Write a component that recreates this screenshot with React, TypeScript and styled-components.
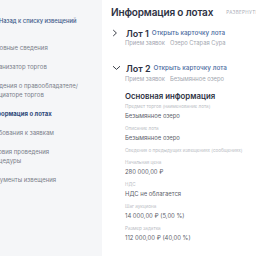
import React from "react";
import styled, { createGlobalStyle } from "styled-components";

const Global = createGlobalStyle`
  html, body { margin: 0; padding: 0; background: #ffffff; overflow: hidden; }
  body { font-family: Inter, "Noto Sans", sans-serif; }
`;

const Page = styled.div`
  display: flex;
  margin-left: -20px;
  width: 300px;
  height: 256px;
`;

const Sidebar = styled.aside`
  width: 122px;
  flex: none;
  background: #f5f6f8;
  box-sizing: border-box;
  padding: 17px 8px 0 8px;
`;

const BackLink = styled.div`
  display: flex;
  align-items: center;
  gap: 3px;
  font-size: 5.8px;
  line-height: 8px;
  font-weight: 500;
  color: #3d5a8a;
  white-space: nowrap;
`;

const NavList = styled.ul`
  list-style: none;
  margin: 17.5px 0 0;
  padding: 0;
  display: flex;
  flex-direction: column;
  gap: 10px;
`;

const NavItem = styled.li<{ $active?: boolean }>`
  display: flex;
  flex-direction: column;
  font-size: 6px;
  line-height: 9px;
  white-space: nowrap;
  font-weight: ${(p) => (p.$active ? 700 : 400)};
  color: ${(p) => (p.$active ? "#2f4a7a" : "#7a7e8a")};
`;

const Main = styled.main`
  flex: 1;
  padding: 5px 0 0 9px;
  overflow: hidden;
`;

const Header = styled.div`
  display: flex;
  align-items: center;
  gap: 13px;
  white-space: nowrap;
`;

const Title = styled.h1`
  margin: 0;
  font-size: 10px;
  line-height: 14px;
  letter-spacing: -0.15px;
  font-weight: 600;
  color: #2d3142;
`;

const ExpandAll = styled.span`
  font-size: 4.6px;
  letter-spacing: 0.3px;
  color: #a9adb6;
  text-transform: uppercase;
`;

const Lot = styled.section<{ $first?: boolean }>`
  margin-top: ${(p) => (p.$first ? 8 : 15)}px;
`;

const LotHead = styled.div`
  display: flex;
  align-items: center;
  height: 12px;
  white-space: nowrap;
`;

const Chevron = styled.span`
  width: 14px;
  flex: none;
  display: flex;
  align-items: center;
  padding-left: 1px;
`;

const LotName = styled.span`
  font-size: 9px;
  font-weight: 600;
  color: #2d3142;
`;

const LotLink = styled.span`
  margin-left: 3px;
  font-size: 6.35px;
  font-weight: 500;
  color: #4a6aa0;
`;

const LotMeta = styled.div<{ $gap?: number }>`
  display: grid;
  grid-template-columns: 45px auto;
  padding-left: 14px;
  margin-top: ${(p) => p.$gap ?? 0}px;
  font-size: 5.8px;
  line-height: 8px;
  color: #a3a7b0;
  white-space: nowrap;
`;

const SectionTitle = styled.h2`
  margin: 8px 0 0 14px;
  font-size: 7.8px;
  line-height: 10px;
  font-weight: 600;
  color: #2d3142;
`;

const Fields = styled.div`
  display: flex;
  flex-direction: column;
  gap: 5px;
  margin: 2px 0 0 14px;
`;

const Field = styled.div`
  display: flex;
  flex-direction: column;
  white-space: nowrap;
`;

const Label = styled.span`
  font-size: 4.6px;
  line-height: 7px;
  color: #b9bcc3;
`;

const Value = styled.span`
  margin-top: 1px;
  font-size: 5.9px;
  line-height: 9px;
  color: #5d616b;
`;

const Right = () => (
  <svg width="6" height="8" viewBox="0 0 6 8" fill="none">
    <path d="M1.2 1 L4.4 4 L1.2 7" stroke="#3a3e48" strokeWidth="1" />
  </svg>
);

const Down = () => (
  <svg width="9" height="6" viewBox="0 0 9 6" fill="none">
    <path d="M1 1.2 L4.5 4.4 L8 1.2" stroke="#3a3e48" strokeWidth="1" />
  </svg>
);

const Back = () => (
  <svg width="8" height="8" viewBox="0 0 8 8" fill="none">
    <path d="M7 4 H1.5 M4 1.5 L1.5 4 L4 6.5" stroke="#3d5a8a" strokeWidth="0.9" />
  </svg>
);

const nav: string[][] = [
  ["Основные сведения"],
  ["Организатор торгов"],
  ["Сведения о правообладателе/", "инициаторе торгов"],
  ["Информация о лотах"],
  ["Требования к заявкам"],
  ["Условия проведения", "процедуры"],
  ["Документы извещения"],
];

const fields: [string, string?][] = [
  ["Предмет торгов (наименование лота)", "Безымянное озеро"],
  ["Описание лота", "Безымянное озеро"],
  ["Сведения о предыдущих извещениях (сообщениях)"],
  ["Начальная цена", "280 000,00 ₽"],
  ["НДС", "НДС не облагается"],
  ["Шаг аукциона", "14 000,00 ₽  (5,00 %)"],
  ["Размер задатка", "112 000,00 ₽  (40,00 %)"],
];

export default function App() {
  return (
    <>
      <Global />
      <Page>
        <Sidebar>
          <BackLink>
            <Back />
            Назад к списку извещений
          </BackLink>
          <NavList>
            {nav.map((lines) => (
              <NavItem key={lines[0]} $active={lines[0] === "Информация о лотах"}>
                {lines.map((l) => (
                  <span key={l}>{l}</span>
                ))}
              </NavItem>
            ))}
          </NavList>
        </Sidebar>
        <Main>
          <Header>
            <Title>Информация о лотах</Title>
            <ExpandAll>Развернуть все</ExpandAll>
          </Header>
          <Lot $first>
            <LotHead>
              <Chevron>
                <Right />
              </Chevron>
              <LotName>Лот 1</LotName>
              <LotLink>Открыть карточку лота</LotLink>
            </LotHead>
            <LotMeta>
              <span>Прием заявок</span>
              <span>Озеро Старая Сура</span>
            </LotMeta>
          </Lot>
          <Lot>
            <LotHead>
              <Chevron>
                <Down />
              </Chevron>
              <LotName>Лот 2</LotName>
              <LotLink>Открыть карточку лота</LotLink>
            </LotHead>
            <LotMeta $gap={1}>
              <span>Прием заявок</span>
              <span>Безымянное озеро</span>
            </LotMeta>
            <SectionTitle>Основная информация</SectionTitle>
            <Fields>
              {fields.map(([l, v]) => (
                <Field key={l}>
                  <Label>{l}</Label>
                  {v && <Value>{v}</Value>}
                </Field>
              ))}
            </Fields>
          </Lot>
        </Main>
      </Page>
    </>
  );
}
